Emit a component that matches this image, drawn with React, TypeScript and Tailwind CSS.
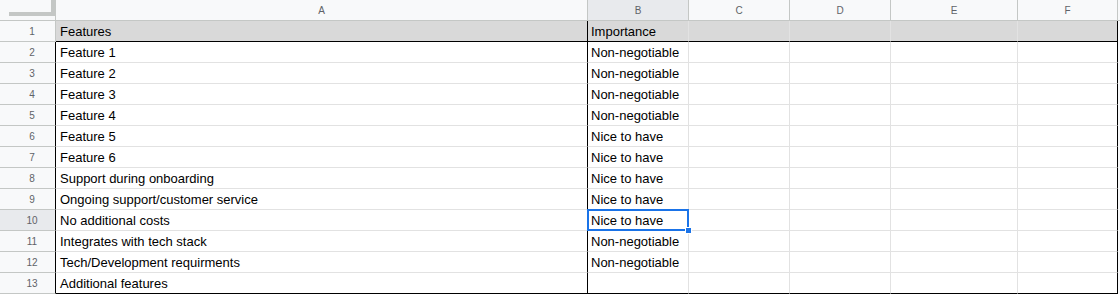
import React from "react";

type Row = { a: string; b: string };

const rows: Row[] = [
  { a: "Features", b: "Importance" },
  { a: "Feature 1", b: "Non-negotiable" },
  { a: "Feature 2", b: "Non-negotiable" },
  { a: "Feature 3", b: "Non-negotiable" },
  { a: "Feature 4", b: "Non-negotiable" },
  { a: "Feature 5", b: "Nice to have" },
  { a: "Feature 6", b: "Nice to have" },
  { a: "Support during onboarding", b: "Nice to have" },
  { a: "Ongoing support/customer service", b: "Nice to have" },
  { a: "No additional costs", b: "Nice to have" },
  { a: "Integrates with tech stack", b: "Non-negotiable" },
  { a: "Tech/Development requirments", b: "Non-negotiable" },
  { a: "Additional features", b: "" },
];

const SELECTED_ROW = 10;

const colHeaders = [
  { label: "A", w: "w-[532px]" },
  { label: "B", w: "w-[101px]" },
  { label: "C", w: "w-[101px]" },
  { label: "D", w: "w-[101px]" },
  { label: "E", w: "w-[127px]" },
  { label: "F", w: "w-[100px]" },
];

function HeaderRow() {
  return (
    <div className="flex h-[21px] bg-[#f8f9fa]">
      <div className="w-[56px] h-[21px] shrink-0 border-r border-b border-[#c4c7c5] bg-[#f8f9fa]">
        <div className="ml-[9px] w-[46px] h-[16px] border-r-4 border-b-4 border-[#c4c7c5]" />
      </div>
      {colHeaders.map((c) => (
        <div
          key={c.label}
          className={`${c.w} shrink-0 h-[21px] border-r border-b border-[#c4c7c5] flex items-center justify-center text-[10px] text-[#5f6368] ${
            c.label === "B" ? "bg-[#e8eaed]" : "bg-[#f8f9fa]"
          }`}
        >
          {c.label}
        </div>
      ))}
      <div className="flex-1 h-[21px] border-b border-[#c4c7c5]" />
    </div>
  );
}

function DataRow({ row, n }: { row: Row; n: number }) {
  const first = n === 1;
  const last = n === rows.length;
  const selected = n === SELECTED_ROW;
  const bg = first ? "bg-[#d9d9d9]" : "bg-white";
  const bottom = first || last ? "border-b-black" : "border-b-[#e2e2e2]";
  const plain = `shrink-0 h-[21px] border-r border-b border-r-[#e2e2e2] ${bottom} ${bg}`;

  return (
    <div className={`flex h-[21px] ${selected ? "relative z-10" : ""}`}>
      <div
        className={`w-[56px] shrink-0 h-[21px] border-r border-b border-b-[#c4c7c5] ${
          first ? "border-r-[#c4c7c5]" : "border-r-black"
        } ${selected ? "bg-[#e8eaed]" : "bg-[#f8f9fa]"} flex items-center justify-center pl-[9px] text-[10px] text-[#5f6368]`}
      >
        {n}
      </div>
      <div
        className={`w-[532px] shrink-0 h-[21px] border-r border-b border-r-black ${bottom} ${bg} flex items-center pl-[4px] pt-[1px] text-[13px] text-black whitespace-nowrap`}
      >
        {row.a}
      </div>
      <div
        className={`relative w-[101px] ${plain} flex items-center pl-[3px] pt-[1px] text-[13px] text-black whitespace-nowrap`}
      >
        {row.b}
        {selected && (
          <>
            <div className="absolute -top-px -left-px -right-px -bottom-px border-2 border-[#1a73e8]" />
            <div className="absolute -right-[4px] -bottom-[4px] w-[7px] h-[7px] bg-[#1a73e8] border border-white" />
          </>
        )}
      </div>
      <div className={`w-[101px] ${plain}`} />
      <div className={`w-[101px] ${plain}`} />
      <div className={`w-[127px] ${plain}`} />
      <div className={`w-[100px] shrink-0 h-[21px] border-r border-b border-r-black ${bottom} ${bg}`} />
      <div className="flex-1 h-[21px] bg-[#f8f9fa]" />
    </div>
  );
}

export default function App() {
  return (
    <div
      className="w-[1120px] h-[295px] overflow-hidden bg-white"
      style={{ fontFamily: '"Liberation Sans", Arial, sans-serif' }}
    >
      <HeaderRow />
      {rows.map((r, i) => (
        <DataRow key={i} row={r} n={i + 1} />
      ))}
    </div>
  );
}
